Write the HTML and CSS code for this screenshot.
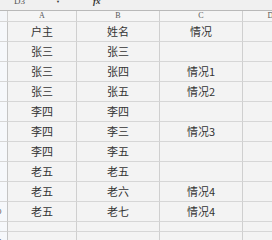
FILE: index.html
```html
<!DOCTYPE html>
<html>
<head>
<meta charset="utf-8">
<link rel="stylesheet" href="styles.css">
</head>
<body>
<div class="bar">
  <span class="name">D3</span>
  <span class="arrow">▼</span>
  <span class="fx">fx</span>
</div>
<div class="sheet">
  <div class="corner"></div><div class="ch">A</div><div class="ch">B</div><div class="ch">C</div><div class="ch">D</div>

  <div class="rh"><span>1</span></div><div class="c">户主</div><div class="c">姓名</div><div class="c">情况</div><div class="c"></div>
  <div class="rh"><span>2</span></div><div class="c">张三</div><div class="c">张三</div><div class="c"></div><div class="c"></div>
  <div class="rh"><span>3</span></div><div class="c">张三</div><div class="c">张四</div><div class="c">情况1</div><div class="c"></div>
  <div class="rh"><span>4</span></div><div class="c">张三</div><div class="c">张五</div><div class="c">情况2</div><div class="c"></div>
  <div class="rh"><span>5</span></div><div class="c">李四</div><div class="c">李四</div><div class="c"></div><div class="c"></div>
  <div class="rh"><span>6</span></div><div class="c">李四</div><div class="c">李三</div><div class="c">情况3</div><div class="c"></div>
  <div class="rh"><span>7</span></div><div class="c">李四</div><div class="c">李五</div><div class="c"></div><div class="c"></div>
  <div class="rh"><span>8</span></div><div class="c">老五</div><div class="c">老五</div><div class="c"></div><div class="c"></div>
  <div class="rh"><span>9</span></div><div class="c">老五</div><div class="c">老六</div><div class="c">情况4</div><div class="c"></div>
  <div class="rh"><span>10</span></div><div class="c">老五</div><div class="c">老七</div><div class="c">情况4</div><div class="c"></div>
  <div class="rh"><span>11</span></div><div class="c"></div><div class="c"></div><div class="c"></div><div class="c"></div>
  <div class="rh"><span>12</span></div><div class="c"></div><div class="c"></div><div class="c"></div><div class="c"></div>
</div>
</body>
</html>
```

FILE: styles.css
```css
html, body {
  margin: 0;
  padding: 0;
}
body {
  width: 272px;
  height: 240px;
  overflow: hidden;
  background: #f3f3f3;
  font-family: "Noto Sans CJK SC", sans-serif;
  color: #333;
}
.bar {
  box-sizing: border-box;
  height: 11px;
  border-bottom: 1px solid #b9b9b9;
  background: #f0f0f0;
  position: relative;
  font-family: "Liberation Sans", sans-serif;
  font-size: 9px;
  color: #555;
  overflow: hidden;
}
.bar .name {
  position: absolute;
  left: 14px;
  top: -4px;
  font-family: "Liberation Serif", serif;
  font-size: 9px;
}
.bar .arrow {
  position: absolute;
  left: 56px;
  top: -1px;
  font-size: 4px;
  color: #333;
}
.bar .fx {
  position: absolute;
  left: 93px;
  top: -4px;
  font-family: "Liberation Serif", serif;
  font-style: italic;
  font-weight: bold;
  font-size: 9px;
  color: #333;
}
.sheet {
  display: grid;
  grid-template-columns: 8px 69px 83px 83px 56px;
  grid-template-rows: 11px repeat(10, 20px) 10px 10px;
  width: 299px;
}
.sheet > div {
  box-sizing: border-box;
  border-right: 1px solid #cfcfcf;
  border-bottom: 1px solid #d6d6d6;
  overflow: hidden;
}
.corner {
  background: #f4f6f9;
}
.ch {
  background: #f5f5f5;
  font-family: "Liberation Serif", serif;
  font-size: 8px;
  line-height: 10px;
  text-align: center;
  color: #555;
}
.rh {
  background: #f6f8fb;
  display: flex;
  border-right-color: #c4c4c4 !important;
}
.rh span {
  flex: none;
  width: 20px;
  margin-left: -13px;
  text-align: center;
  font-family: "Liberation Sans", sans-serif;
  font-size: 8px;
  line-height: 19px;
  color: #555;
}
.c {
  background: #f3f3f3;
  font-size: 11px;
  line-height: 19px;
  text-align: center;
  color: #333;
}
```
